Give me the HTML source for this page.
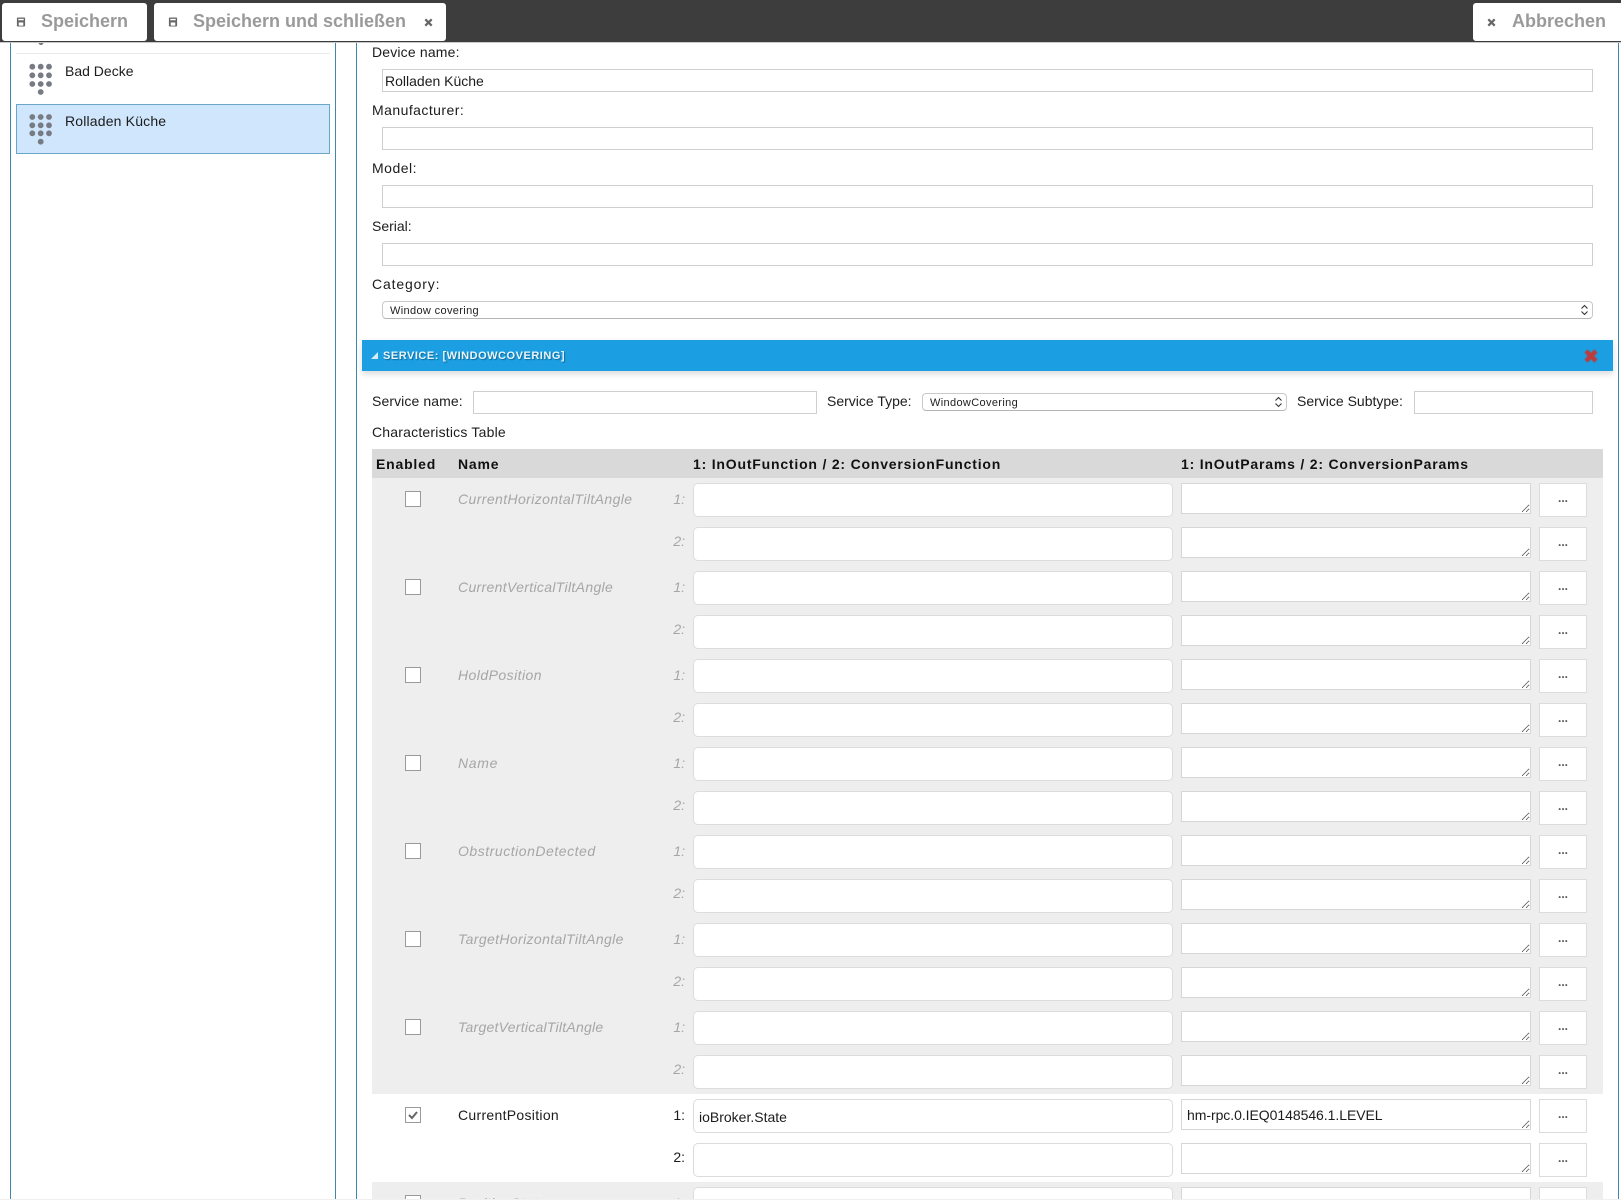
<!DOCTYPE html>
<html><head><meta charset="utf-8"><style>
*{box-sizing:border-box}
html,body{margin:0;padding:0;overflow:hidden;width:1621px;height:1200px}
body{background:#fff;font:14px/20px "Liberation Sans",sans-serif;color:#1c1c1c}
#p{position:absolute;left:0;top:0;width:1621px;height:1200px;overflow:hidden;background:#fff}
.a,.r>*{position:absolute}
.t{white-space:nowrap}
#bar{position:absolute;left:0;top:0;width:1621px;height:43px;background:#3d3d3d;border-bottom:1px solid #c8c8c8;z-index:5}
.b{position:absolute;top:3px;height:38px;background:#fff;border-radius:3px;font:bold 18px/36px "Liberation Sans",sans-serif;color:#9a9a9a;white-space:nowrap}
.b>*{position:absolute}
.dots{position:absolute}
.in{border:1px solid #cfcfcf;background:#fff;height:23px;margin:0;padding:0 2px;font:14px/23px "Liberation Sans",sans-serif;color:#1c1c1c}
.sel{border:1px solid #c9c9c9;border-bottom-color:#b5b5b5;border-radius:4px;background:#fff;font:11px/18px "Liberation Sans",sans-serif;letter-spacing:.35px;padding-left:7px;color:#222}
.r{position:absolute;left:372px;width:1231px;height:44px}
.n{left:86px;top:6px;line-height:20px;white-space:nowrap;letter-spacing:.4px}
.k{left:270px;width:43px;text-align:right;top:4px;line-height:20px}
.n+.k{top:6px}
.f{left:321px;top:0;width:480px;height:34px;border:1px solid #dcdcdc;border-radius:5px;background:#fff;padding:2px 5px 0;line-height:30px;font-size:14px;white-space:nowrap}
textarea{left:809px;top:0;width:350px;height:31px;border:1px solid #d6d6d6;background:#fff;margin:0;padding:7px 5px 0;font:14px/16px "Liberation Sans",sans-serif;color:#1c1c1c;resize:both;overflow:hidden;outline:0;letter-spacing:-.05px}
.m{left:1167px;top:0;width:48px;height:34px;border:1px solid #dcdcdc;background:#fff;text-align:center;font:bold 12px/29px "Liberation Sans",sans-serif;color:#555}
.c{left:33px;top:8px;width:16px;height:16px;border:1px solid #9a9a9a;background:#fff}
.g{background:#eee}
.g .n,.g .k{color:#a6a6a6;font-style:italic}
.pl{position:absolute;top:43px;width:1px;height:1156px;background:#3f86b0}
</style></head><body><div id="p">

<div id="bar">
<div class="b" style="left:2px;width:145px"><svg style="left:14px;top:14px" width="10" height="10" viewBox="0 0 11 11"><path d="M1 1.5Q1 .5 2 .5H9Q10 .5 10 1.5V9.5Q10 10.5 9 10.5H2Q1 10.5 1 9.5Z" fill="#666"/><rect x="2.5" y="2" width="6" height="1.6" fill="#fff"/><rect x="3" y="6" width="5" height="3.5" fill="#fff"/></svg><span style="left:39px">Speichern</span></div>
<div class="b" style="left:154px;width:292px"><svg style="left:14px;top:14px" width="10" height="10" viewBox="0 0 11 11"><path d="M1 1.5Q1 .5 2 .5H9Q10 .5 10 1.5V9.5Q10 10.5 9 10.5H2Q1 10.5 1 9.5Z" fill="#666"/><rect x="2.5" y="2" width="6" height="1.6" fill="#fff"/><rect x="3" y="6" width="5" height="3.5" fill="#fff"/></svg><span style="left:39px">Speichern und schließen</span><svg style="left:270px;top:15px" width="9" height="9" viewBox="0 0 9 9"><path d="M1.3 1.3L7.7 7.7M7.7 1.3L1.3 7.7" stroke="#666" stroke-width="2.2"/></svg></div>
<div class="b" style="left:1473px;width:148px;border-radius:3px 0 0 3px"><svg style="left:14px;top:15px" width="9" height="9" viewBox="0 0 9 9"><path d="M1.3 1.3L7.7 7.7M7.7 1.3L1.3 7.7" stroke="#666" stroke-width="2.2"/></svg><span style="left:39px">Abbrechen</span></div>
</div>

<div class="pl" style="left:10px"></div>
<div class="pl" style="left:335px"></div>
<div class="pl" style="left:356px"></div>
<div class="pl" style="left:1618px"></div>
<div class="a" style="left:0;top:1199px;width:1621px;height:1px;background:#f0f0f0;z-index:4"></div>

<div class="a" style="left:16px;top:53px;width:314px;height:1px;background:#eaeaea"></div>
<svg class="a" style="left:38px;top:43px" width="6" height="3"><ellipse cx="3" cy="0" rx="2.4" ry="2" fill="#777b84"/></svg>
<svg class="dots" style="left:28px;top:62px" width="26" height="36" viewBox="0 0 26 36" fill="#777b84"><circle cx="4.3" cy="4.7" r="2.9"/><circle cx="12.7" cy="4.7" r="2.9"/><circle cx="21" cy="4.7" r="2.9"/><circle cx="4.3" cy="13.3" r="2.9"/><circle cx="12.7" cy="13.3" r="2.9"/><circle cx="21" cy="13.3" r="2.9"/><circle cx="4.3" cy="22" r="2.9"/><circle cx="12.7" cy="22" r="2.9"/><circle cx="21" cy="22" r="2.9"/><circle cx="12.7" cy="30" r="2.9"/></svg>
<div class="a t" style="left:65px;top:61px">Bad Decke</div>
<div class="a" style="left:16px;top:104px;width:314px;height:50px;background:#cfe6fd;border:1px solid #6aa6c8"></div>
<svg class="dots" style="left:28px;top:112px" width="26" height="36" viewBox="0 0 26 36" fill="#777b84"><circle cx="4.3" cy="5" r="2.9"/><circle cx="12.7" cy="5" r="2.9"/><circle cx="21" cy="5" r="2.9"/><circle cx="4.3" cy="13.3" r="2.9"/><circle cx="12.7" cy="13.3" r="2.9"/><circle cx="21" cy="13.3" r="2.9"/><circle cx="4.3" cy="21.3" r="2.9"/><circle cx="12.7" cy="21.3" r="2.9"/><circle cx="21" cy="21.3" r="2.9"/><circle cx="12.7" cy="29.7" r="2.9"/></svg>
<div class="a t" style="left:65px;top:111px;letter-spacing:.17px">Rolladen Küche</div>

<div class="a t" style="left:372px;top:42px;letter-spacing:.17px">Device name:</div>
<div class="a in" style="left:382px;top:69px;width:1211px">Rolladen Küche</div>
<div class="a t" style="left:372px;top:100px;letter-spacing:.45px">Manufacturer:</div>
<div class="a in" style="left:382px;top:127px;width:1211px"></div>
<div class="a t" style="left:372px;top:158px;letter-spacing:.5px">Model:</div>
<div class="a in" style="left:382px;top:185px;width:1211px"></div>
<div class="a t" style="left:372px;top:216px">Serial:</div>
<div class="a in" style="left:382px;top:243px;width:1211px"></div>
<div class="a t" style="left:372px;top:274px;letter-spacing:.85px">Category:</div>
<div class="a sel" style="left:382px;top:301px;width:1211px;height:18px">Window covering<svg class="a" style="right:3px;top:2px" width="9" height="12" viewBox="0 0 9 12" fill="none" stroke="#333" stroke-width="1.1"><path d="M1.5 4.5L4.5 1.5L7.5 4.5M1.5 7.5L4.5 10.5L7.5 7.5"/></svg></div>

<div class="a" style="left:362px;top:340px;width:1251px;height:31px;background:#1b9fe2;box-shadow:0 3px 6px rgba(0,0,0,.15)">
<svg class="a" style="left:9px;top:12px" width="7" height="7"><path d="M0 7L7 7L7 0Z" fill="#d5ecf9"/></svg>
<div class="a t" style="left:21px;top:6px;color:#e8f5fc;font:bold 11px/20px 'Liberation Sans',sans-serif;letter-spacing:.52px;text-shadow:1px 1px 1px rgba(0,0,0,.35)">SERVICE: [WINDOWCOVERING]</div>
<svg class="a" style="left:1222px;top:9px;filter:blur(.4px)" width="14" height="14" viewBox="0 0 14 14"><path d="M2 2L12 12M12 2L2 12" stroke="#bd3b3b" stroke-width="4.5"/></svg>
</div>

<div class="a t" style="left:372px;top:391px;letter-spacing:.1px">Service name:</div>
<div class="a in" style="left:473px;top:391px;width:344px"></div>
<div class="a t" style="left:827px;top:391px">Service Type:</div>
<div class="a sel" style="left:922px;top:393px;width:365px;height:18px">WindowCovering<svg class="a" style="right:3px;top:2px" width="9" height="12" viewBox="0 0 9 12" fill="none" stroke="#333" stroke-width="1.1"><path d="M1.5 4.5L4.5 1.5L7.5 4.5M1.5 7.5L4.5 10.5L7.5 7.5"/></svg></div>
<div class="a t" style="left:1297px;top:391px">Service Subtype:</div>
<div class="a in" style="left:1414px;top:391px;width:179px"></div>
<div class="a t" style="left:372px;top:422px;letter-spacing:.2px">Characteristics Table</div>

<div class="a" style="left:372px;top:449px;width:1231px;height:29px;background:#d9d9d9;font-weight:bold;letter-spacing:.8px;line-height:31px;color:#111">
<span class="a t" style="left:4px">Enabled</span><span class="a t" style="left:86px">Name</span><span class="a t" style="left:321px">1: InOutFunction / 2: ConversionFunction</span><span class="a t" style="left:809px">1: InOutParams / 2: ConversionParams</span>
</div>
<div class="a g" style="left:372px;top:478px;width:1231px;height:616px"></div>
<div class="a g" style="left:372px;top:1182px;width:1231px;height:17px"></div>

<div class="r g" style="top:483px;background:none"><div class="c"></div><div class="n">CurrentHorizontalTiltAngle</div><div class="k">1:</div><div class="f"></div><textarea></textarea><div class="m">...</div></div>
<div class="r g" style="top:527px;background:none"><div class="k">2:</div><div class="f"></div><textarea></textarea><div class="m">...</div></div>
<div class="r g" style="top:571px;background:none"><div class="c"></div><div class="n" style="letter-spacing:.33px">CurrentVerticalTiltAngle</div><div class="k">1:</div><div class="f"></div><textarea></textarea><div class="m">...</div></div>
<div class="r g" style="top:615px;background:none"><div class="k">2:</div><div class="f"></div><textarea></textarea><div class="m">...</div></div>
<div class="r g" style="top:659px;background:none"><div class="c"></div><div class="n" style="letter-spacing:.45px">HoldPosition</div><div class="k">1:</div><div class="f"></div><textarea></textarea><div class="m">...</div></div>
<div class="r g" style="top:703px;background:none"><div class="k">2:</div><div class="f"></div><textarea></textarea><div class="m">...</div></div>
<div class="r g" style="top:747px;background:none"><div class="c"></div><div class="n" style="letter-spacing:.7px">Name</div><div class="k">1:</div><div class="f"></div><textarea></textarea><div class="m">...</div></div>
<div class="r g" style="top:791px;background:none"><div class="k">2:</div><div class="f"></div><textarea></textarea><div class="m">...</div></div>
<div class="r g" style="top:835px;background:none"><div class="c"></div><div class="n" style="letter-spacing:.53px">ObstructionDetected</div><div class="k">1:</div><div class="f"></div><textarea></textarea><div class="m">...</div></div>
<div class="r g" style="top:879px;background:none"><div class="k">2:</div><div class="f"></div><textarea></textarea><div class="m">...</div></div>
<div class="r g" style="top:923px;background:none"><div class="c"></div><div class="n" style="letter-spacing:.37px">TargetHorizontalTiltAngle</div><div class="k">1:</div><div class="f"></div><textarea></textarea><div class="m">...</div></div>
<div class="r g" style="top:967px;background:none"><div class="k">2:</div><div class="f"></div><textarea></textarea><div class="m">...</div></div>
<div class="r g" style="top:1011px;background:none"><div class="c"></div><div class="n" style="letter-spacing:.25px">TargetVerticalTiltAngle</div><div class="k">1:</div><div class="f"></div><textarea></textarea><div class="m">...</div></div>
<div class="r g" style="top:1055px;background:none"><div class="k">2:</div><div class="f"></div><textarea></textarea><div class="m">...</div></div>
<div class="r" style="top:1099px"><div class="c"><svg style="display:block" width="14" height="14" viewBox="0 0 14 14" fill="none" stroke="#666" stroke-width="2"><path d="M3 7L6 10L11 4"/></svg></div><div class="n" style="letter-spacing:.3px">CurrentPosition</div><div class="k">1:</div><div class="f">ioBroker.State</div><textarea>hm-rpc.0.IEQ0148546.1.LEVEL</textarea><div class="m">...</div></div>
<div class="r" style="top:1143px"><div class="k">2:</div><div class="f"></div><textarea></textarea><div class="m">...</div></div>
<div class="r g" style="top:1187px;background:none"><div class="c"></div><div class="n">PositionState</div><div class="k">1:</div><div class="f"></div><textarea></textarea><div class="m">...</div></div>

</div></body></html>
